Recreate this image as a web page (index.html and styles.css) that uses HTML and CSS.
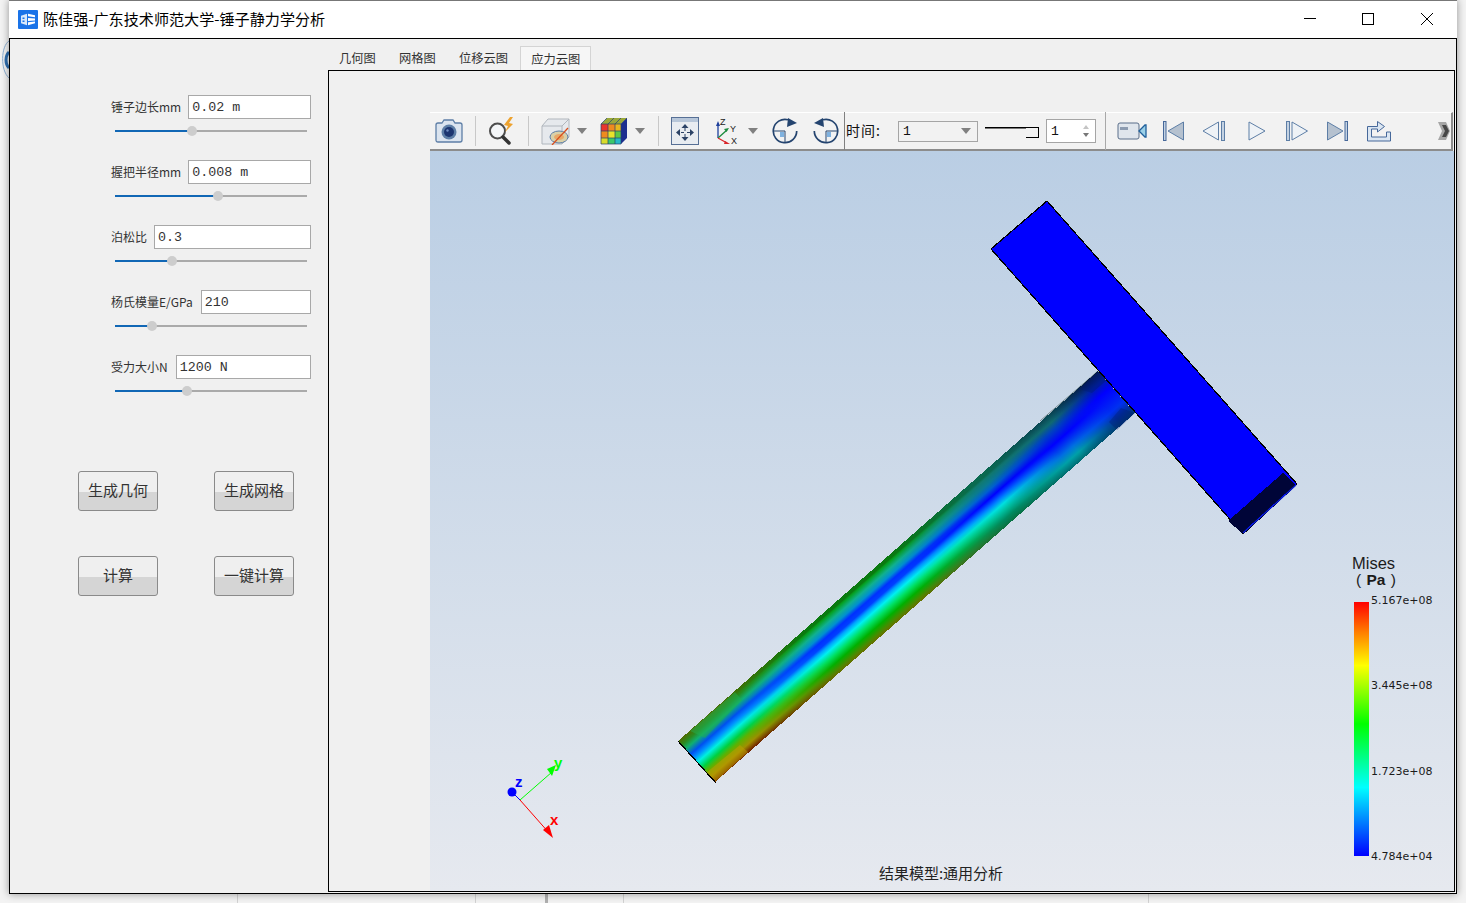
FILE: index.html
```html
<!DOCTYPE html>
<html lang="zh-CN">
<head>
<meta charset="utf-8">
<title>陈佳强-广东技术师范大学-锤子静力学分析</title>
<link rel="stylesheet" href="styles.css">
</head>
<body>
<svg class="desk-arc" width="9" height="40" viewBox="0 0 9 40"><path d="M9 1C1 6 0 30 9 38" fill="none" stroke="#8db0d4"/><path d="M9 12C5 16 5 24 9 28" fill="none" stroke="#2f6fb0" stroke-width="3"/></svg>
<div class="window">
  <header class="titlebar">
    <svg class="app-icon" width="20" height="19" viewBox="0 0 20 20" preserveAspectRatio="none"><rect width="20" height="20" rx="1" fill="#1a73e8"/><path d="M3 6 9 4v12l-6-2z" fill="#d7e8fb"/><path d="M10 4l7 1.500v2l-7-1zM10 8.500l7 .5v2l-7 .5zM10 13l7-1v2l-7 2z" fill="#fff"/><path d="M4.500 8h2v1.500h-2zM4.500 11h2v1.500h-2z" fill="#1a73e8"/></svg>
    <div class="title-text">陈佳强-广东技术师范大学-锤子静力学分析</div>
    <div class="win-controls">
      <div class="win-btn"><svg width="12" height="12" viewBox="0 0 12 12"><path d="M0 5.500h12" stroke="#000"/></svg></div>
      <div class="win-btn"><svg width="12" height="12" viewBox="0 0 12 12"><rect x=".5" y=".5" width="11" height="11" fill="none" stroke="#000"/></svg></div>
      <div class="win-btn"><svg width="12" height="12" viewBox="0 0 12 12"><path d="M0 0l12 12M12 0 0 12" stroke="#000"/></svg></div>
    </div>
  </header>
  <main class="main">
    <aside class="side">
      <div class="form">
        <div class="field">
          <div class="field-row"><div class="label">锤子边长mm</div><div class="input">0.02 m</div></div>
          <div class="slider"><div class="slider-fill" style="width:40.100%"><span class="knob"></span></div></div>
        </div>
        <div class="field">
          <div class="field-row"><div class="label">握把半径mm</div><div class="input">0.008 m</div></div>
          <div class="slider"><div class="slider-fill" style="width:53.600%"><span class="knob"></span></div></div>
        </div>
        <div class="field">
          <div class="field-row"><div class="label">泊松比</div><div class="input">0.3</div></div>
          <div class="slider"><div class="slider-fill" style="width:29.700%"><span class="knob"></span></div></div>
        </div>
        <div class="field">
          <div class="field-row"><div class="label label-wide">杨氏模量E/GPa</div><div class="input">210</div></div>
          <div class="slider"><div class="slider-fill" style="width:19.300%"><span class="knob"></span></div></div>
        </div>
        <div class="field">
          <div class="field-row"><div class="label label-wide">受力大小N</div><div class="input">1200 N</div></div>
          <div class="slider"><div class="slider-fill" style="width:37.500%"><span class="knob"></span></div></div>
        </div>
      </div>
      <div class="actions">
        <div class="btn">生成几何</div>
        <div class="btn">生成网格</div>
        <div class="btn">计算</div>
        <div class="btn">一键计算</div>
      </div>
    </aside>
    <section class="content">
      <nav class="tabs">
        <div class="tab">几何图</div>
        <div class="tab">网格图</div>
        <div class="tab">位移云图</div>
        <div class="tab tab-active">应力云图</div>
      </nav>
      <div class="page">
        <div class="viewer">
          <div class="toolbar">
            <svg class="ic i-cam" viewBox="0 0 28 24" width="28" height="24"><path d="M7 4 9 1h9l2 3h5q2 0 2 2v15q0 2-2 2H3q-2 0-2-2V6q0-2 2-2z" fill="#dbe4ef" stroke="#5d7ea6" stroke-width="1.300"/><circle cx="14" cy="13" r="7.500" fill="#5d7ea6"/><circle cx="14" cy="13" r="5" fill="#1c3570"/><circle cx="12.500" cy="11.500" r="1.200" fill="#6f8cc0"/></svg>
            <span class="sep s1"></span>
            <svg class="ic i-mag" viewBox="0 0 29 28" width="29" height="28"><circle cx="9.500" cy="14" r="7.500" fill="#f4f6f8" stroke="#4d4d4d" stroke-width="2"/><path d="M15 20l6 6" stroke="#333" stroke-width="3.500" stroke-linecap="round"/><path d="M22 0l-6 8 4 1-3 6 8-8-4-1 4-6z" fill="#eda22e"/></svg>
            <span class="sep s2"></span>
            <svg class="ic i-cube" viewBox="0 0 29 28" width="29" height="28"><path d="M1 9l6-7h21v18l-7 7H1z" fill="#e6e9ed" stroke="#b0b6bd"/><path d="M1 9h20v18M21 9l7-7" fill="none" stroke="#b0b6bd"/><ellipse cx="18" cy="20" rx="9" ry="6" fill="#d9d0a8" stroke="#5d7ea6"/><ellipse cx="18" cy="20" rx="5" ry="3" fill="#e8a968"/><path d="M11 28 27 11" stroke="#d8501f" stroke-width="1.300"/></svg>
            <span class="tri t1"></span>
            <svg class="ic i-col" viewBox="0 0 28 28" width="28" height="28"><path d="M1 7 7 1h20l-6 6z" fill="#9aa83a"/><path d="M21 7l6-6v20l-6 6z" fill="#1d2f8f"/><rect x="1" y="7" width="7" height="7" fill="#e8352c"/><rect x="8" y="7" width="7" height="7" fill="#ef8b1f"/><rect x="15" y="7" width="6" height="7" fill="#e8b71f"/><rect x="1" y="14" width="7" height="7" fill="#ef8b1f"/><rect x="8" y="14" width="7" height="7" fill="#e9e32a"/><rect x="15" y="14" width="6" height="7" fill="#5fc843"/><rect x="1" y="21" width="7" height="6" fill="#d9dc2c"/><rect x="8" y="21" width="7" height="6" fill="#3cc86a"/><rect x="15" y="21" width="6" height="6" fill="#27b9c9"/><path d="M1 7h20v20H1zM8 7v20M15 7v20M1 14h20M1 21h20M7 1 1 7M14 1 8 7M21 1l-6 6M27 1l-6 6" fill="none" stroke="#25406e" stroke-width=".7"/></svg>
            <span class="tri t2"></span>
            <span class="sep s3"></span>
            <svg class="ic i-fit" viewBox="0 0 28 28" width="28" height="28"><rect x=".5" y=".5" width="27" height="27" fill="#e8ecf1" stroke="#566f95"/><rect x="1" y="1" width="26" height="4" fill="#b7c6d9"/><path d="M14 11v3M14 17v3M10 15.500h3M16 15.500h3" stroke="#2b4266"/><path d="M14 7l-3.500 4h7zM14 24l-3.500-4h7zM5 15.500l4-3.500v7zM23 15.500 19 12v7z" fill="#2b4266"/></svg>
            <svg class="ic i-axes" viewBox="0 0 24 28" width="24" height="28"><path d="M2 21V7" stroke="#1d3f9c" stroke-width="1.300"/><path d="M2 4 0 9h4z" fill="#1d3f9c"/><path d="M2 21 11 13" stroke="#1a8a3c" stroke-width="1.300"/><path d="M13 11l-5 1 2.500 3z" fill="#1a8a3c"/><path d="M2 21 11 26" stroke="#d9262b" stroke-width="1.300"/><path d="M14 27l-5-3-1 3z" fill="#d9262b"/><text x="4" y="8" class="ax-t">Z</text><text x="14" y="15" class="ax-t">Y</text><text x="15" y="27" class="ax-t">X</text></svg>
            <span class="tri t3"></span>
            <svg class="ic i-rot1" viewBox="0 0 26 26" width="26" height="26"><path d="M16 1.700A11.700 11.700 0 1 0 24.700 13" fill="none" stroke="#24446f" stroke-width="1.700"/><path d="M16 0l9 5-10 4z" fill="#24446f"/><path d="M1.300 13H13V24.700" fill="none" stroke="#24446f"/><rect x="8" y="14" width="4" height="5" fill="#7fb2e0"/></svg>
            <svg class="ic i-rot2" viewBox="0 0 26 26" width="26" height="26"><path d="M10 1.700A11.700 11.700 0 1 1 1.300 13" fill="none" stroke="#24446f" stroke-width="1.700"/><path d="M10 0 1 5l10 4z" fill="#24446f"/><path d="M24.700 13H13V24.700" fill="none" stroke="#24446f"/><rect x="14" y="14" width="4" height="5" fill="#7fb2e0"/></svg>
            <span class="sep s4"></span>
            <div class="time-label">时间:</div>
            <div class="combo"><span>1</span><span class="combo-arrow"></span></div>
            <div class="tb-slider"><span class="tb-handle"></span></div>
            <div class="spin"><span>1</span><span class="spin-arrows"><i class="up"></i><i class="down"></i></span></div>
            <span class="sep s5"></span>
            <svg class="ic i-vid" viewBox="0 0 30 18" width="30" height="18"><rect x="1" y="1" width="21" height="16" rx="2" fill="#dfe5ec" stroke="#5a6e8a"/><rect x="3" y="5" width="8" height="3" fill="#8c9bb0"/><path d="M22 9l6-6h1v12h-1z" fill="#9ad0e8" stroke="#1f5f9a" stroke-width="1.300"/></svg>
            <svg class="ic i-first" viewBox="0 0 21 20" width="21" height="20"><rect x=".5" y=".5" width="2.500" height="19" fill="#c4d2e2" stroke="#46689a"/><path d="M20.500 1v18L5 10z" fill="#b5c1cf" stroke="#5d7ea6"/></svg>
            <svg class="ic i-prev" viewBox="0 0 23 20" width="23" height="20"><path d="M16.500 1v18L1 10z" fill="#eef2f6" stroke="#5d7ea6"/><rect x="19.500" y=".5" width="3" height="19" fill="#c4d2e2" stroke="#5d7ea6"/></svg>
            <svg class="ic i-play" viewBox="0 0 18 20" width="18" height="20"><path d="M1 1v18l16-9z" fill="#eef2f6" stroke="#5d7ea6"/></svg>
            <svg class="ic i-next" viewBox="0 0 22 20" width="22" height="20"><rect x=".5" y=".5" width="3" height="19" fill="#c4d2e2" stroke="#5d7ea6"/><path d="M6 1v18l15.500-9z" fill="#eef2f6" stroke="#5d7ea6"/></svg>
            <svg class="ic i-last" viewBox="0 0 21 20" width="21" height="20"><path d="M.5 1v18L16 10z" fill="#b5c1cf" stroke="#5d7ea6"/><rect x="18" y=".5" width="2.500" height="19" fill="#c4d2e2" stroke="#46689a"/></svg>
            <svg class="ic i-exp" viewBox="0 0 24 21" width="24" height="21"><path d="M.5 5.500h10v-5l7 5-7 5.500v-3h-6v8h15v-5h4v9H.5z" fill="#dbe6f2" stroke="#46689a" stroke-linejoin="round"/></svg>
            <svg class="ic i-more" viewBox="0 0 12 18" width="12" height="18"><path d="M0 0h8l4 9-4 9H0l4-9z" fill="#a6a6a6"/><path d="M4 3h4l3 6-3 6H4l3-6z" fill="#474747"/></svg>
          </div>
          <div class="scene">
            <svg class="model" viewBox="430 151 1024 740" width="1024" height="740">
              <defs>
                <linearGradient id="gA" gradientUnits="userSpaceOnUse" x1="678" y1="741" x2="714.400" y2="782.500">
                  <stop offset="0" stop-color="#4f6b00"/><stop offset=".1" stop-color="#2a8a20"/><stop offset=".2" stop-color="#10b070"/><stop offset=".33" stop-color="#0050f0"/><stop offset=".42" stop-color="#0090ff"/><stop offset=".52" stop-color="#00f0e0"/><stop offset=".65" stop-color="#00d040"/><stop offset=".75" stop-color="#60b000"/><stop offset=".88" stop-color="#a09000"/><stop offset="1" stop-color="#702000"/>
                </linearGradient>
                <linearGradient id="gB" gradientUnits="userSpaceOnUse" x1="678" y1="741" x2="714.400" y2="782.500">
                  <stop offset="0" stop-color="#0a7a10"/><stop offset=".05" stop-color="#0a7a10"/><stop offset=".08" stop-color="#05a020"/><stop offset=".18" stop-color="#10b090"/><stop offset=".28" stop-color="#0090d0"/><stop offset=".36" stop-color="#0030ff"/><stop offset=".44" stop-color="#0040ff"/><stop offset=".5" stop-color="#00a0ff"/><stop offset=".58" stop-color="#00f0f0"/><stop offset=".7" stop-color="#00e060"/><stop offset=".82" stop-color="#00b000"/><stop offset=".93" stop-color="#4a8a00"/><stop offset="1" stop-color="#6a7000"/>
                </linearGradient>
                <linearGradient id="gC" gradientUnits="userSpaceOnUse" x1="678" y1="741" x2="714.400" y2="782.500">
                  <stop offset="0" stop-color="#0a6a50"/><stop offset=".06" stop-color="#0a6a50"/><stop offset=".1" stop-color="#107a70"/><stop offset=".2" stop-color="#0a7a90"/><stop offset=".3" stop-color="#0060d0"/><stop offset=".42" stop-color="#0000ff"/><stop offset=".55" stop-color="#0080ff"/><stop offset=".65" stop-color="#00e0e0"/><stop offset=".75" stop-color="#00c0a0"/><stop offset=".88" stop-color="#008a60"/><stop offset="1" stop-color="#0a7040"/>
                </linearGradient>
                <linearGradient id="gD" gradientUnits="userSpaceOnUse" x1="678" y1="741" x2="714.400" y2="782.500">
                  <stop offset="0" stop-color="#0a4a55"/><stop offset=".12" stop-color="#106a70"/><stop offset=".25" stop-color="#0040c0"/><stop offset=".45" stop-color="#0000ff"/><stop offset=".7" stop-color="#0070e0"/><stop offset=".85" stop-color="#00a0a8"/><stop offset="1" stop-color="#006a70"/>
                </linearGradient>
                <linearGradient id="gE" gradientUnits="userSpaceOnUse" x1="678" y1="741" x2="714.400" y2="782.500">
                  <stop offset="0" stop-color="#051a50"/><stop offset=".15" stop-color="#0020a0"/><stop offset=".35" stop-color="#0000ff"/><stop offset=".7" stop-color="#0030f0"/><stop offset=".85" stop-color="#0030a0"/><stop offset="1" stop-color="#003a70"/>
                </linearGradient>
                <linearGradient id="mB" gradientUnits="userSpaceOnUse" x1="696" y1="761" x2="1116" y2="392">
                  <stop offset=".1" stop-color="#000"/><stop offset=".3" stop-color="#fff"/>
                </linearGradient>
                <linearGradient id="mC" gradientUnits="userSpaceOnUse" x1="696" y1="761" x2="1116" y2="392">
                  <stop offset=".5" stop-color="#000"/><stop offset=".7" stop-color="#fff"/>
                </linearGradient>
                <linearGradient id="mD" gradientUnits="userSpaceOnUse" x1="696" y1="761" x2="1116" y2="392">
                  <stop offset=".72" stop-color="#000"/><stop offset=".85" stop-color="#fff"/>
                </linearGradient>
                <linearGradient id="mE" gradientUnits="userSpaceOnUse" x1="696" y1="761" x2="1116" y2="392">
                  <stop offset=".88" stop-color="#000"/><stop offset=".97" stop-color="#fff"/>
                </linearGradient>
                <mask id="maskB" maskUnits="userSpaceOnUse" x="430" y="151" width="1024" height="740"><rect x="430" y="151" width="1024" height="740" fill="url(#mB)"/></mask>
                <mask id="maskC" maskUnits="userSpaceOnUse" x="430" y="151" width="1024" height="740"><rect x="430" y="151" width="1024" height="740" fill="url(#mC)"/></mask>
                <mask id="maskD" maskUnits="userSpaceOnUse" x="430" y="151" width="1024" height="740"><rect x="430" y="151" width="1024" height="740" fill="url(#mD)"/></mask>
                <mask id="maskE" maskUnits="userSpaceOnUse" x="430" y="151" width="1024" height="740"><rect x="430" y="151" width="1024" height="740" fill="url(#mE)"/></mask>
              </defs>
              <g shape-rendering="crispEdges">
                <polygon points="678,741 1098,371 1135,413 715,782" fill="url(#gA)"/>
                <polygon points="678,741 1098,371 1135,413 715,782" fill="url(#gB)" mask="url(#maskB)"/>
                <polygon points="678,741 1098,371 1135,413 715,782" fill="url(#gC)" mask="url(#maskC)"/>
                <polygon points="678,741 1098,371 1135,413 715,782" fill="url(#gD)" mask="url(#maskD)"/>
                <polygon points="678,741 1098,371 1135,413 715,782" fill="url(#gE)" mask="url(#maskE)"/>
              </g>
              <path d="M1098 371l10 8-16 14-12-4zM1135 413l-14-5-12 14 8 8z" fill="#001a70" opacity=".35"/>
              <path d="M690 731l45-39 7 8-37 38z" fill="#20b050" opacity=".5"/>
              <path d="M706 773l34-28 8 7-33 30z" fill="#c0a000" opacity=".5"/>
              <path d="M678 741 716 783" stroke="#000" stroke-width="1.200" shape-rendering="crispEdges"/>
              <path d="M1040 421 1098 371" stroke="#0b2a20" stroke-width=".8" opacity=".6"/>
              <polygon points="1047,201 991,249 1243,534 1297,484" fill="#0000ff" stroke="#000" stroke-width="1.200" shape-rendering="crispEdges"/>
              <polygon points="1283,473 1228,521 1242,533 1295,485" fill="#000538" shape-rendering="crispEdges"/>
              <path d="M1243 533 1296 485" stroke="#0a1fe0" stroke-width="1.300"/>
              <path d="M512 792 520 800" stroke="#0000ff"/>
              <path d="M520 800 552 772" stroke="#00ff00"/>
              <path d="M520 800 550 834" stroke="#ff0000"/>
              <circle cx="512" cy="792" r="4.500" fill="#0000ff"/>
              <path d="M556 765l-9 4 5 7z" fill="#00ff00"/>
              <path d="M553 838l-10-8 6-5z" fill="#ff0000"/>
              <text x="515" y="787" class="tri-t tri-z">z</text>
              <text x="554" y="768" class="tri-t tri-y">y</text>
              <text x="550" y="825" class="tri-t tri-x">x</text>
            </svg>
            <div class="legend">
              <div class="legend-title">Mises</div>
              <div class="legend-unit">( <b class="unit-b">Pa</b> )</div>
              <div class="legend-body">
                <div class="legend-bar"></div>
                <div class="legend-values">
                  <div>5.167e+08</div>
                  <div>3.445e+08</div>
                  <div>1.723e+08</div>
                  <div>4.784e+04</div>
                </div>
              </div>
            </div>
            <div class="caption">结果模型:通用分析</div>
          </div>
        </div>
      </div>
    </section>
  </main>
</div>
<div class="desk-strip"><span class="cell c1"></span><span class="cell c2"></span><span class="cell c3"></span><span class="cell c4"></span><span class="cell c5"></span></div>
</body>
</html>
```
FILE: styles.css
```css
* { box-sizing: border-box; }
html, body { margin: 0; height: 903px; overflow: hidden; }
body {
  position: relative;
  background: #f3f3f3;
  font-family: "Noto Sans CJK SC", "Noto Sans", sans-serif;
  color: #333;
}
.desk-arc { position: absolute; left: 0; top: 40px; }

.window {
  position: relative;
  z-index: 1;
  margin-left: 9px;
  width: 1448px;
  height: 894px;
  display: flex;
  flex-direction: column;
  background: #fff;
  box-shadow: 0 0 8px rgba(0, 0, 0, .4);
}
.titlebar {
  height: 39px;
  flex: none;
  display: flex;
  align-items: center;
  padding: 0 1px 1px 9px;
  border-top: 1px solid #777;
  border-bottom: 1px solid #000;
  background: #fff;
}
.app-icon { flex: none; margin-top: 1px; }
.title-text { margin: 0 0 2px 5px; font-size: 15.100px; line-height: 20px; color: #000; white-space: nowrap; }
.win-controls { margin-left: auto; display: flex; }
.win-btn { width: 58px; height: 36px; display: flex; align-items: center; justify-content: center; }
.win-btn:nth-child(2) { margin-right: 1px; }

.main {
  flex: 1;
  min-height: 0;
  display: flex;
  background: #f0f0f0;
  border: 1px solid #000;
  border-top: 0;
}
.side { width: 318px; flex: none; padding: 56px 0 0 101px; }
.form { width: 200px; display: flex; flex-direction: column; gap: 24px; }
.field { display: flex; flex-direction: column; gap: 7px; }
.field-row { display: flex; align-items: center; gap: 7px; height: 24px; }
.label { font-size: 12px; padding-bottom: 2px; white-space: nowrap; color: #333; }
.label-wide { padding-right: 1px; }
.input {
  flex: 1;
  height: 24px;
  border: 1px solid #a8a8a8;
  background: #fff;
  padding: 2px 0 0 3px;
  font: 13.33px/20px "Liberation Mono", monospace;
  color: #333;
  white-space: pre;
}
.slider { position: relative; height: 10px; margin: 0 4px; display: flex; align-items: center; background: linear-gradient(#0000 4px, #aaa 4px, #aaa 6px, #0000 6px); }
.slider-fill { position: relative; height: 2px; background: #1167b5; }
.knob {
  position: absolute;
  right: -5px;
  top: -4px;
  width: 10px;
  height: 10px;
  border-radius: 50%;
  background: #cdcdcd;
}
.actions {
  margin: 75px 0 0 -33px;
  display: grid;
  grid-template-columns: 80px 80px;
  column-gap: 56px;
  row-gap: 45px;
}
.btn {
  height: 40px;
  border: 1px solid #8a8a8a;
  border-radius: 3px;
  background: linear-gradient(#efefef 0, #efefef 20px, #d5d5d5 20px, #d5d5d5 100%);
  font-size: 15px;
  line-height: 36px;
  text-align: center;
  color: #333;
}

.content { flex: 1; min-width: 0; display: flex; flex-direction: column; padding: 7px 1px 1px 0; }
.tabs { height: 24px; flex: none; display: flex; gap: 1.250px; }
.tab { padding: 0 11px; font-size: 12.250px; line-height: 25px; color: #333; white-space: nowrap; }
.tab-active { padding: 0 10px; background: #f6f6f6; border: 1px solid #d4d4d4; border-bottom: 0; line-height: 24px; }
.page {
  flex: 1;
  min-height: 0;
  border: 1px solid #000;
  padding: 41px 0 0 101px;
  display: flex;
}
.viewer { flex: 1; min-width: 0; display: flex; flex-direction: column; }

.toolbar {
  height: 39px;
  flex: none;
  width: 1023px;
  display: flex;
  align-items: center;
  padding-left: 5px;
  background: #f2f2f2;
  border-top: 1px solid #fff;
  border-bottom: 2px solid #8c8c8c;
  border-right: 2px solid #8c8c8c;
}
.ic { flex: none; display: block; }
.sep { flex: none; width: 1px; height: 30px; background: #c8c8c8; }
.tri { flex: none; width: 0; height: 0; border-left: 5px solid transparent; border-right: 5px solid transparent; border-top: 6px solid #808080; }
.i-cam { margin-right: 12px; }
.s1 { margin-right: 12px; }
.i-mag { margin-right: 11px; }
.s2 { margin-right: 12px; }
.t1 { margin: 0 13px 0 7px; }
.t2 { margin: 0 13px 0 7px; }
.s3 { margin-right: 12px; }
.i-fit { margin-right: 17px; }
.t3 { margin: 0 14px 0 8px; }
.i-rot1 { margin-right: 15px; }
.s4 { margin: 0 1px 0 5px; height: 38px; background: #808080; }
.ax-t { font: 9px "Liberation Sans", sans-serif; fill: #222; }
.time-label { width: 36px; font-size: 14px; letter-spacing: 1px; margin: 0 16px 2px 0; white-space: nowrap; color: #111; }
.combo {
  width: 80px;
  height: 21px;
  margin-right: 7px;
  border: 1px solid #a5a5a5;
  display: flex;
  align-items: center;
  justify-content: space-between;
  padding: 0 6px 0 4px;
  font: 13px "Liberation Mono", monospace;
  color: #111;
}
.combo-arrow { width: 0; height: 0; border-left: 5px solid transparent; border-right: 5px solid transparent; border-top: 6px solid #808080; }
.tb-slider { position: relative; width: 54px; height: 11px; margin: 2px 7px 0 0; border-top: 1px solid #000; box-shadow: inset 0 1px 0 #777; }
.tb-handle { position: absolute; right: 0; top: 0; width: 13px; height: 10px; background: #f2f2f2; border-right: 1px solid #000; border-bottom: 1px solid #000; }
.spin {
  width: 50px;
  height: 24px;
  margin-right: 9px;
  background: #fff;
  border: 1px solid #a5a5a5;
  display: flex;
  align-items: center;
  justify-content: space-between;
  padding: 0 6px 0 4px;
  font: 13px "Liberation Mono", monospace;
  color: #111;
}
.spin-arrows { display: flex; flex-direction: column; gap: 4px; }
.spin-arrows i { display: block; width: 0; height: 0; border-left: 3px solid transparent; border-right: 3px solid transparent; }
.spin-arrows .up { border-bottom: 4px solid #c4c4c4; }
.spin-arrows .down { border-top: 4px solid #777; }
.s5 { margin-right: 11px; height: 38px; background: #a8a8a8; }
.i-vid { margin-right: 16px; }
.i-first { margin-right: 18px; }
.i-prev { margin-right: 23px; }
.i-play { margin-right: 20px; }
.i-next { margin-right: 19px; }
.i-last { margin-right: 19px; }
.i-exp { margin-right: 47px; }

.scene {
  position: relative;
  flex: 1;
  min-height: 0;
  background: linear-gradient(#bacee4, #e6e9ef);
  overflow: hidden;
}
.model { position: absolute; left: 0; top: 0; display: block; }
.tri-t { font: bold 15px "Liberation Sans", sans-serif; }
.tri-z { fill: #0000ff; }
.tri-y { fill: #00ff00; }
.tri-x { fill: #ff0000; }

.legend { position: absolute; left: 922px; top: 404px; width: 90px; color: #1b1b1b; }
.legend-title { font: 16.500px/16px "Liberation Sans", sans-serif; }
.legend-unit { font: 15.500px/17px "Liberation Sans", sans-serif; margin-left: 4px; white-space: pre; word-spacing: 1px; }
.unit-b { font-weight: bold; }
.legend-body { display: flex; margin: 5px 0 0 2px; height: 270px; }
.legend-bar {
  width: 15px;
  height: 254px;
  margin-top: 9px;
  background: linear-gradient(#ff0000 0, #ff7f00 12%, #ffff00 25%, #00ff00 48%, #00ffff 73%, #0000ff 100%);
}
.legend-values {
  margin: 1px 0 0 2px;
  display: flex;
  flex-direction: column;
  justify-content: space-between;
  height: 270px;
  font: 11px/14px "DejaVu Sans", sans-serif;
  white-space: nowrap;
}
.caption {
  position: absolute;
  left: 0;
  right: 0;
  bottom: 7px;
  padding-right: 2px;
  text-align: center;
  font-size: 15px;
  line-height: 22px;
  color: #222;
}

.desk-strip { display: flex; height: 9px; }
.cell { flex: none; height: 9px; border-right: 1px solid #d2d2d2; }
.c1 { width: 238px; }
.c2 { width: 238px; }
.c3 { width: 72px; border-right: 3px solid #b0b0b0; }
.c4 { width: 76px; }
.c5 { width: 525px; }
```
